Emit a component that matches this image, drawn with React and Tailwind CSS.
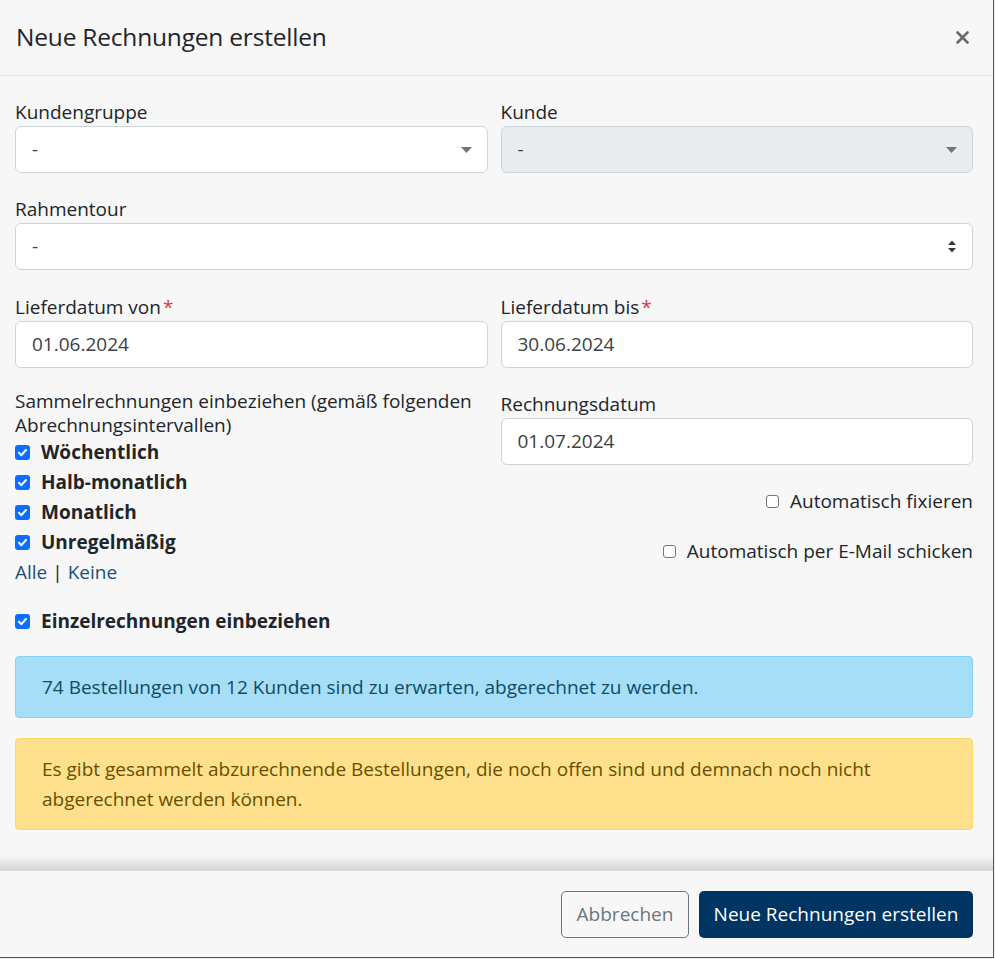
import React from "react";

const font = { fontFamily: '"Open Sans", "Noto Sans", sans-serif' };

function Caret({ color = "#6c757d" }) {
  return (
    <svg width="11" height="6" viewBox="0 0 11 6" className="shrink-0">
      <path d="M0 0 H11 L5.5 6 Z" fill={color} />
    </svg>
  );
}

function SortArrows() {
  return (
    <svg width="10" height="15" viewBox="0 0 10 15" className="shrink-0">
      <path d="M1 6 L5 1.5 L9 6 Z" fill="#343a40" />
      <path d="M1 9 L5 13.5 L9 9 Z" fill="#343a40" />
    </svg>
  );
}

function Checked() {
  return (
    <span className="w-[15px] h-[15px] rounded-[3px] bg-[#0d6efd] flex items-center justify-center shrink-0">
      <svg width="11" height="11" viewBox="0 0 11 11">
        <path d="M2 5.8 L4.4 8.2 L9 3" stroke="#fff" strokeWidth="2" fill="none" strokeLinecap="round" strokeLinejoin="round" />
      </svg>
    </span>
  );
}

function Unchecked() {
  return <span className="w-[13px] h-[13px] rounded-[3px] border border-[#767676] bg-white shrink-0" />;
}

function Label({ children, req }) {
  return (
    <div className="h-[26px] leading-[26px] text-[19px] text-[#212529] mb-px">
      {children}
      {req && <span className="text-[#dc3545] ml-[2px]">*</span>}
    </div>
  );
}

function Input({ value, disabled, icon }) {
  return (
    <div
      className={`h-[47px] rounded-[6px] border border-[#ced4da] flex items-center justify-between pl-[16px] pr-[15px] text-[19px] text-[#3d4145] ${
        disabled ? "bg-[#e9ecef]" : "bg-white"
      }`}
    >
      <span>{value}</span>
      {icon}
    </div>
  );
}

function CheckRow({ children }) {
  return (
    <div className="h-[30px] flex items-center gap-[11px] text-[19px] font-bold text-[#212529]">
      <Checked />
      <span>{children}</span>
    </div>
  );
}

export default function App() {
  return (
    <div className="w-[995px] h-[959px] bg-[#eeeeee] overflow-hidden" style={font}>
      <div className="w-[994px] h-[958px] bg-[#f7f7f7] border-r border-b border-[#555] flex flex-col">
        {/* header */}
        <div className="h-[76px] border-b border-[#dee2e6] flex items-center justify-between pl-[16px] pr-[24px] shrink-0">
          <h5 className="text-[24.5px] font-medium text-[#212529] tracking-[-0.2px]">Neue Rechnungen erstellen</h5>
          <svg width="13" height="13" viewBox="0 0 13 13">
            <path d="M1.5 1.5 L11.5 11.5 M11.5 1.5 L1.5 11.5" stroke="#6b6b6b" strokeWidth="2.6" strokeLinecap="round" />
          </svg>
        </div>

        {/* body */}
        <div className="flex-1 pl-[15px] pr-[20px] pt-[23px]">
          <div className="grid grid-cols-2 gap-x-[13px]">
            <div>
              <Label>Kundengruppe</Label>
              <Input value="-" icon={<Caret />} />
            </div>
            <div>
              <Label>Kunde</Label>
              <Input value="-" disabled icon={<Caret />} />
            </div>
          </div>

          <div className="mt-[23px]">
            <Label>Rahmentour</Label>
            <Input value="-" icon={<SortArrows />} />
          </div>

          <div className="mt-[24px] grid grid-cols-2 gap-x-[13px]">
            <div>
              <Label req>Lieferdatum von</Label>
              <Input value="01.06.2024" />
            </div>
            <div>
              <Label req>Lieferdatum bis</Label>
              <Input value="30.06.2024" />
            </div>
          </div>

          <div className="mt-[21px] grid grid-cols-2 gap-x-[13px]">
            <div>
              <p className="text-[19px] leading-[24px] text-[#212529] pr-[4px]">
                Sammelrechnungen einbeziehen (gemäß folgenden Abrechnungsintervallen)
              </p>
              <CheckRow>Wöchentlich</CheckRow>
              <CheckRow>Halb-monatlich</CheckRow>
              <CheckRow>Monatlich</CheckRow>
              <CheckRow>Unregelmäßig</CheckRow>
              <div className="h-[30px] flex items-center text-[19px] text-[#1d4f7e]">
                <span>Alle</span>
                <span className="text-[#212529] mx-[5px]">|</span>
                <span>Keine</span>
              </div>
            </div>
            <div className="pt-[2px]">
              <Label>Rechnungsdatum</Label>
              <Input value="01.07.2024" />
              <div className="mt-[21px] h-[30px] flex items-center justify-end gap-[11px] text-[19px] text-[#212529]">
                <Unchecked />
                <span>Automatisch fixieren</span>
              </div>
              <div className="mt-[20px] h-[30px] flex items-center justify-end gap-[11px] text-[19px] text-[#212529]">
                <Unchecked />
                <span>Automatisch per E-Mail schicken</span>
              </div>
            </div>
          </div>

          <div className="mt-[19px]">
            <CheckRow>Einzelrechnungen einbeziehen</CheckRow>
          </div>

          <div className="mt-[20px] rounded-[4px] border border-[#86d2f6] bg-[#a6def8] pl-[26px] pr-[16px] py-[15px] text-[19px] leading-[30px] text-[#0f4b66]">
            74 Bestellungen von 12 Kunden sind zu erwarten, abgerechnet zu werden.
          </div>

          <div className="mt-[20px] rounded-[4px] border border-[#ffd966] bg-[#ffe18d] pl-[26px] pr-[60px] py-[15px] text-[19px] leading-[30px] text-[#684f00]">
            Es gibt gesammelt abzurechnende Bestellungen, die noch offen sind und demnach noch nicht abgerechnet werden können.
          </div>
        </div>

        {/* scroll shadow */}
        <div className="h-[15px] bg-gradient-to-b from-[#f7f7f7] to-[#d6d6d6] shrink-0" />

        {/* footer */}
        <div className="h-[87px] border-t border-[#dedede] flex items-center justify-end gap-[10px] pr-[20px] shrink-0">
          <button className="h-[47px] w-[128px] rounded-[5px] border border-[#6c757d] text-[#6c757d] text-[19px] bg-transparent">
            Abbrechen
          </button>
          <button className="h-[47px] w-[274px] rounded-[5px] bg-[#003462] text-white text-[19px]">
            Neue Rechnungen erstellen
          </button>
        </div>
      </div>
    </div>
  );
}
